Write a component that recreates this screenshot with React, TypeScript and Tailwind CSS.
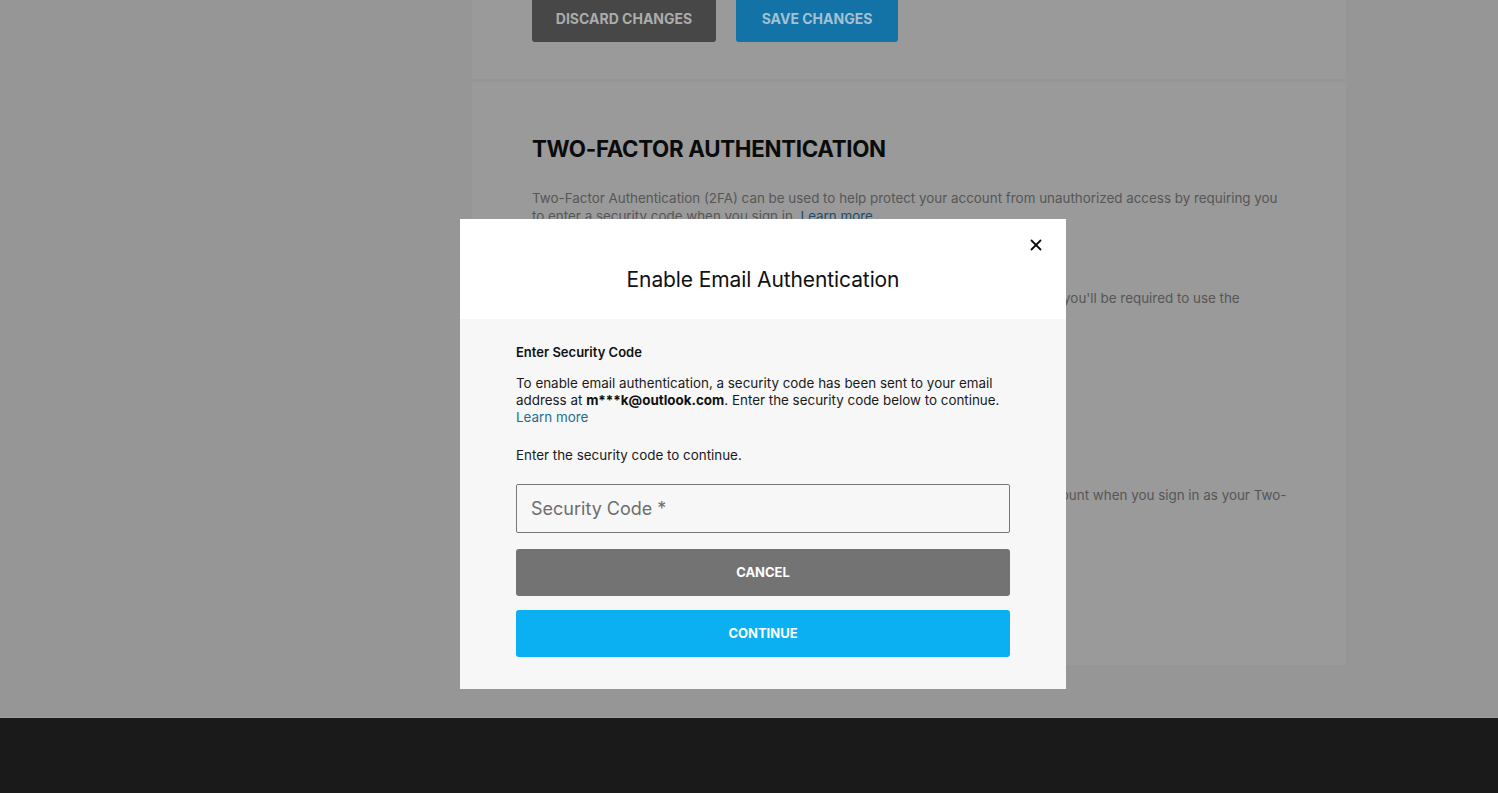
import { X } from "lucide-react";

const font = { fontFamily: "Inter, 'Noto Sans', 'Liberation Sans', sans-serif" };

function BackgroundPage() {
  return (
    <div className="min-h-[793px] flex flex-col bg-[#969696]">
      <div className="flex-1 flex">
        {/* sidebar column (empty) */}
        <div className="w-[472px] shrink-0" />
        <main className="w-[874px] flex flex-col gap-[3px]">
          <section className="bg-[#9a9a9a] px-[60px] pb-[37px]">
            <div className="flex gap-5 -mt-[6px]">
              <button className="h-[48px] w-[184px] rounded-[3px] bg-[#474747] text-[14px] font-bold uppercase text-[#acacac]">
                Discard Changes
              </button>
              <button className="h-[48px] w-[162px] rounded-[3px] bg-[#1373a6] text-[14px] font-bold uppercase text-[#a3c1d2]">
                Save Changes
              </button>
            </div>
          </section>
          <section className="bg-[#9a9a9a] px-[60px] pt-[50px] h-[583px]">
            <h2 className="text-[22.3px] font-bold uppercase tracking-[-0.3px] text-[#0b0b0b] leading-[34px]">
              Two-Factor Authentication
            </h2>
            <p className="mt-[23px] text-[13.4px] leading-[18px] text-[#565656] max-w-[755px]">
              Two-Factor Authentication (2FA) can be used to help protect your account from unauthorized access by requiring you to enter a security code when you sign in.{" "}
              <span className="text-[#1d4d68]">Learn more</span>
            </p>
            <h3 className="mt-[30px] text-[15px] leading-[20px] font-bold uppercase text-[#111]">
              Third-Party Authenticator App
            </h3>
            <p className="mt-[14px] text-[13.4px] leading-[18px] text-[#565656] whitespace-nowrap">
              Use an authenticator app such as Google Authenticator or Authy. When you sign in, you'll be required to use the
              <br />
              security code provided by your authenticator app.
            </p>
            <div className="mt-[24px] h-[44px] w-[230px] rounded-[3px] bg-[#1373a6]" />
            <h3 className="mt-[59px] text-[15px] leading-[20px] font-bold uppercase text-[#111]">
              Email Authentication
            </h3>
            <p className="mt-[14px] text-[13.4px] leading-[18px] text-[#565656] whitespace-nowrap">
              Use a security code sent to the email address associated with your Epic Games account when you sign in as your Two-
              <br />
              Factor Authentication method.
            </p>
          </section>
        </main>
      </div>
      <footer className="h-[76px] bg-[#1a1a1a] border-t border-[#a0a0a0]" />
    </div>
  );
}

function EmailAuthModal() {
  return (
    <div
      role="dialog"
      className="absolute left-[460px] top-[219px] w-[606px] h-[470px] flex flex-col"
      style={font}
    >
      <div className="relative h-[101px] bg-white flex items-center justify-center pt-[22px]">
        <h1 className="text-[21px] font-normal text-[#111] tracking-[-0.1px]">
          Enable Email Authentication
        </h1>
        <button className="absolute right-[17px] top-[13px] p-1 text-[#111]">
          <X className="w-[18px] h-[18px]" strokeWidth={2.4} />
        </button>
      </div>
      <div className="flex-1 bg-[#f7f7f7] px-[56px] pt-[25px] pb-[32px]">
        <div className="text-[13px] leading-[17px] font-semibold text-[#111]">
          Enter Security Code
        </div>
        <p className="mt-[14px] text-[13.4px] leading-[17px] text-[#1a1a1a]">
          To enable email authentication, a security code has been sent to your email address at{" "}
          <b className="font-bold text-[#111]">m***k@outlook.com</b>. Enter the security code below to continue.
          <br />
          <a className="text-[#1f6d90] cursor-pointer">Learn more</a>
        </p>
        <p className="mt-[21px] text-[13.4px] leading-[17px] text-[#1a1a1a]">
          Enter the security code to continue.
        </p>
        <input
          placeholder="Security Code *"
          className="mt-[20px] block w-full h-[49px] rounded-[2px] border border-[#777] bg-[#f7f7f7] px-[14px] text-[18px] text-[#111] placeholder:text-[#6e6e6e] outline-none"
        />
        <div className="mt-[16px] flex flex-col gap-[14px]">
          <button className="h-[47px] w-full rounded-[3px] bg-[#737373] text-[13px] font-bold uppercase text-white">
            Cancel
          </button>
          <button className="h-[47px] w-full rounded-[3px] bg-[#0bb0f2] text-[13px] font-bold uppercase text-white">
            Continue
          </button>
        </div>
      </div>
    </div>
  );
}

export default function App() {
  return (
    <div className="relative w-[1498px] h-[793px] overflow-hidden" style={font}>
      <BackgroundPage />
      <EmailAuthModal />
    </div>
  );
}
